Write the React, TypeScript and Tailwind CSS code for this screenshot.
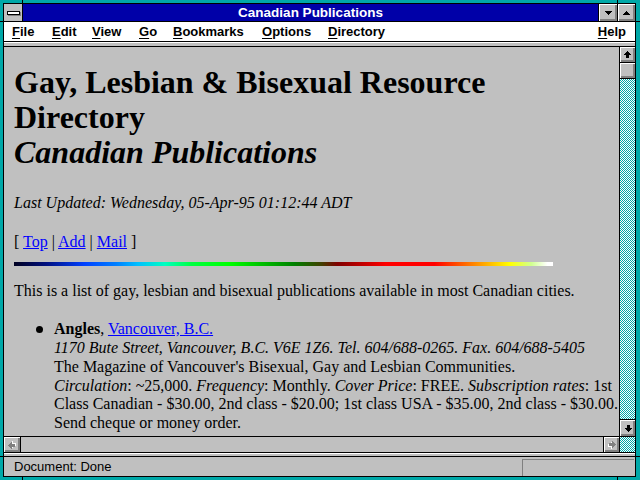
import React from 'react';

type Dir = 'up' | 'down' | 'left' | 'right';

// pixel staircase arrow, pointing up, 7x7
const ARROW = '3,0 4,0 4,1 5,1 5,2 6,2 6,3 7,3 7,4 5,4 5,7 2,7 2,4 0,4 0,3 1,3 1,2 2,2 2,1 3,1';
const ROT: Record<Dir, number> = { up: 0, right: 90, down: 180, left: 270 };

const ScrollArrow = ({ dir, disabled }: { dir: Dir; disabled?: boolean }) => (
  <svg width="8" height="8" viewBox="0 0 8 8" shapeRendering="crispEdges" style={{ transform: `rotate(${ROT[dir]}deg)` }}>
    {disabled ? (
      <>
        <polygon points={ARROW} fill="#ffffff" transform="translate(1,1)" />
        <polygon points={ARROW} fill="#808080" />
      </>
    ) : (
      <polygon points={ARROW} fill="#000000" />
    )}
  </svg>
);

const Triangle = ({ up }: { up?: boolean }) => (
  <svg width="7" height="4" viewBox="0 0 7 4" shapeRendering="crispEdges">
    <polygon points={up ? '3,0 4,0 4,1 5,1 5,2 6,2 6,3 7,3 7,4 0,4 0,3 1,3 1,2 2,2 2,1 3,1' : '0,0 7,0 7,1 6,1 6,2 5,2 5,3 4,3 4,4 3,4 3,3 2,3 2,2 1,2 1,1 0,1'} fill="#000" />
  </svg>
);

const bevel = 'bg-[#c0c0c0] shadow-[inset_1px_1px_0_#fff,inset_-1px_-1px_0_#808080,inset_-2px_-2px_0_#808080]';
const dither = 'bg-[repeating-conic-gradient(#00a8a8_0_25%,#ffffff_0_50%)] bg-[length:2px_2px]';

const Menu = ({ label, w }: { label: string; w?: string }) => (
  <span className={`${w ?? ''} shrink-0`}>
    <span className="underline underline-offset-2">{label[0]}</span>
    {label.slice(1)}
  </span>
);

const Link = ({ children }: { children: React.ReactNode }) => (
  <a className="text-[#0000ff] underline">{children}</a>
);

export default function App() {
  return (
    <div className="relative w-[640px] h-[480px] bg-[#00a8a8] pt-[3px] pb-[3px] pl-[3px] pr-[4px] font-['Liberation_Sans',Arial,sans-serif] text-black">
      {/* frame corner marks */}
      <div className="absolute left-[22px] top-0 h-[3px] w-px bg-black" />
      <div className="absolute left-[617px] top-0 h-[3px] w-px bg-black" />
      <div className="absolute left-[22px] bottom-0 h-[3px] w-px bg-black" />
      <div className="absolute left-[617px] bottom-0 h-[3px] w-px bg-black" />
      <div className="absolute left-0 top-[21px] h-px w-[3px] bg-black" />
      <div className="absolute right-0 top-[21px] h-px w-[4px] bg-black" />
      <div className="absolute left-0 top-[456px] h-px w-[3px] bg-black" />
      <div className="absolute right-0 top-[456px] h-px w-[4px] bg-black" />

      <div className="flex h-full flex-col border border-black bg-[#c0c0c0]">
        {/* title bar */}
        <div className="flex h-[18px] shrink-0 border-b border-black">
          <div className="flex w-[19px] items-center justify-center border-r border-black bg-[#c0c0c0]">
            <div className="h-[4px] w-[13px] border border-black bg-white shadow-[1px_1px_0_#808080]" />
          </div>
          <div className="flex flex-1 items-center justify-center bg-[#0000a8] text-[13.5px] font-bold leading-[17px] text-white">
            Canadian Publications
          </div>
          <div className={`flex w-[19px] items-center justify-center border-l border-black ${bevel}`}>
            <Triangle />
          </div>
          <div className={`flex w-[18px] items-center justify-center border-l border-black ${bevel}`}>
            <Triangle up />
          </div>
        </div>

        {/* menu bar */}
        <div className="flex h-[20px] shrink-0 items-center border-b border-black bg-white pl-[8px] pr-[9px] text-[13px] font-bold leading-[19px]">
          <Menu label="File" w="w-[40px]" />
          <Menu label="Edit" w="w-[40px]" />
          <Menu label="View" w="w-[47px]" />
          <Menu label="Go" w="w-[34px]" />
          <Menu label="Bookmarks" w="w-[89px]" />
          <Menu label="Options" w="w-[66px]" />
          <Menu label="Directory" />
          <span className="ml-auto">
            <span className="underline underline-offset-2">H</span>elp
          </span>
        </div>
        <div className="h-[5px] shrink-0 border-t border-b border-white border-b-black bg-[#c0c0c0]" />

        {/* content + vertical scrollbar */}
        <div className="flex min-h-0 flex-1">
          <div className="flex-1 overflow-hidden pl-[10px] pt-[18px] font-['Liberation_Serif','Times_New_Roman',serif] text-[16px] leading-[19px]">
            <h1 className="whitespace-nowrap text-[32px] font-bold leading-[35px]">
              Gay, Lesbian &amp; Bisexual Resource
              <br />
              Directory
              <br />
              <i>Canadian Publications</i>
            </h1>
            <p className="mt-[23px] italic">Last Updated: Wednesday, 05-Apr-95 01:12:44 ADT</p>
            <p className="mt-[20px]">
              [ <Link>Top</Link> | <Link>Add</Link> | <Link>Mail</Link> ]
            </p>
            <div className="mt-[11px] h-[4px] w-[539px] bg-[linear-gradient(to_right,#000020,#001080_6%,#0040ff_13%,#0080ff_19%,#00c0ff_23%,#00ffc0_28%,#00ff40_33%,#00ff00_40%,#008000_52%,#404000_57%,#800000_60%,#ff0000_69%,#ff0000_78%,#ff8000_85%,#ffff00_92%,#d0ff90_96%,#ffffff_99%)]" />
            <p className="mt-[15px]">This is a list of gay, lesbian and bisexual publications available in most Canadian cities.</p>
            <div className="mt-[20px] flex leading-[18.85px]">
              <div className="w-[40px] shrink-0 pl-[22px] pt-[6px]">
                <div className="h-[7px] w-[7px] rounded-full bg-black" />
              </div>
              <div className="whitespace-nowrap">
                <b>Angles</b>, <Link>Vancouver, B.C.</Link>
                <br />
                <i>1170 Bute Street, Vancouver, B.C. V6E 1Z6. Tel. 604/688-0265. Fax. 604/688-5405</i>
                <br />
                The Magazine of Vancouver's Bisexual, Gay and Lesbian Communities.
                <br />
                <i>Circulation</i>: ~25,000. <i>Frequency</i>: Monthly. <i>Cover Price</i>: FREE. <i>Subscription rates</i>: 1st
                <br />
                Class Canadian - $30.00, 2nd class - $20.00; 1st class USA - $35.00, 2nd class - $30.00.
                <br />
                Send cheque or money order.
              </div>
            </div>
          </div>

          <div className="flex w-[16px] shrink-0 flex-col border-l border-black">
            <div className={`flex h-[16px] shrink-0 items-center justify-center border-b border-black ${bevel}`}>
              <ScrollArrow dir="up" />
            </div>
            <div className={`h-[16px] shrink-0 border-b border-black ${bevel}`} />
            <div className={`flex-1 ${dither}`} />
            <div className={`flex h-[17px] shrink-0 items-center justify-center border-t border-black ${bevel}`}>
              <ScrollArrow dir="down" />
            </div>
          </div>
        </div>

        {/* horizontal scrollbar */}
        <div className="flex h-[16px] shrink-0 border-t border-black">
          <div className={`flex w-[17px] items-center justify-center border-r border-black ${bevel}`}>
            <ScrollArrow dir="left" disabled />
          </div>
          <div className="flex-1 bg-[#c0c0c0]" />
          <div className={`flex w-[16px] items-center justify-center border-l border-black ${bevel}`}>
            <ScrollArrow dir="right" disabled />
          </div>
          <div className={`w-[16px] border-l border-black ${dither}`} />
        </div>
        <div className="h-[5px] shrink-0 border-y border-black bg-[#c0c0c0] shadow-[inset_0_1px_0_#fff]" />

        {/* status bar */}
        <div className="flex h-[19px] shrink-0 items-start bg-[#c0c0c0] pr-px">
          <span className="pl-[10px] pt-[2px] text-[13px] leading-[15px]">Document: Done</span>
          <div className="ml-auto mt-[2px] h-[17px] w-[112px] border-t border-l border-[#808080] border-b-white border-r-white" />
        </div>
      </div>
    </div>
  );
}
